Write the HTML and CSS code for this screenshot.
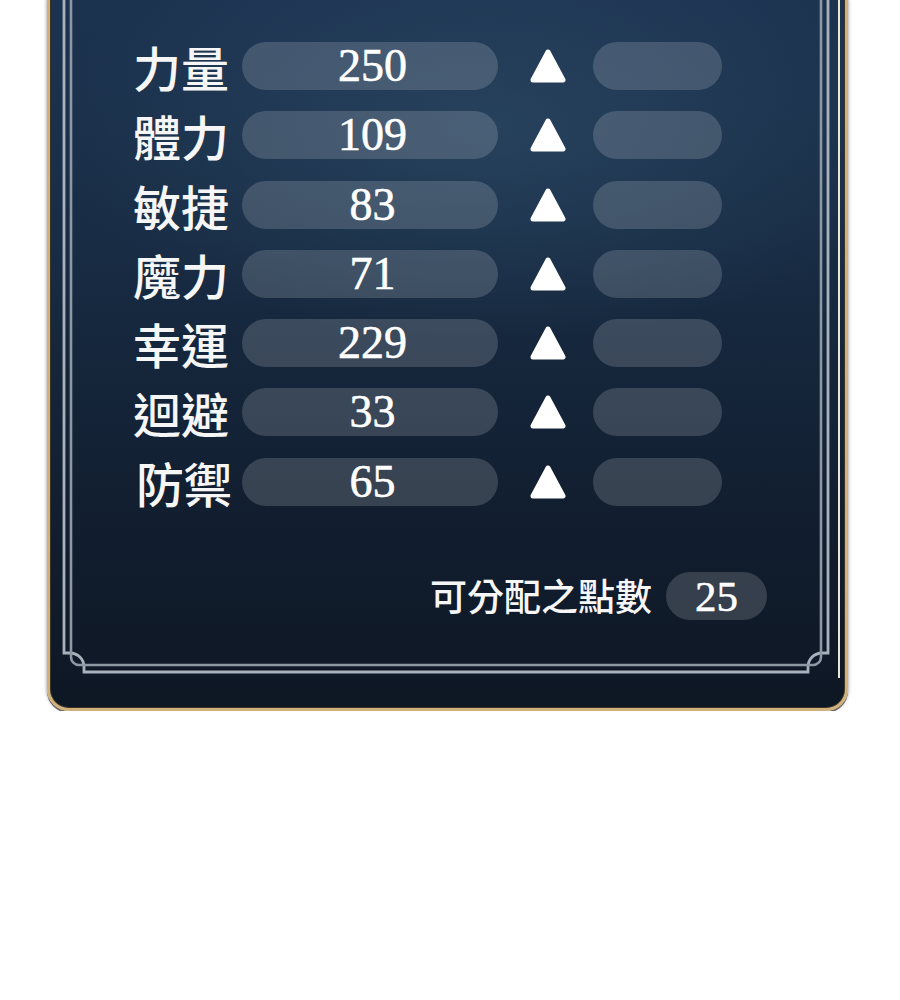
FILE: index.html
```html
<!DOCTYPE html>
<html lang="zh-Hant">
<head>
  <meta charset="UTF-8">
  <title>能力值</title>
  <link rel="stylesheet" href="styles.css">
</head>
<body>

  <div class="panel">
    <!-- decorative inner frame -->
    <svg class="frame" width="795" height="707" viewBox="0 0 795 707">
      <path class="line-outer" d="M14,0 V653 H20 A14,14 0 0 1 34,667 V672 H758 V667 A14,14 0 0 1 772,653 H778 V0"/>
      <path class="line-inner" d="M21,0 V657 A8,8 0 0 0 29,665 H763 A8,8 0 0 0 771,657 V0"/>
      <path class="line-cream" d="M789,0 V678"/>
    </svg>

    <div class="stats">
      <div class="row"><span class="label">力量</span><span class="value">250</span><span class="up"><svg width="36" height="34" viewBox="0 0 36 34"><polygon points="18,3 33,31 3,31"/></svg></span><span class="slot"></span></div>
      <div class="row"><span class="label">體力</span><span class="value">109</span><span class="up"><svg width="36" height="34" viewBox="0 0 36 34"><polygon points="18,3 33,31 3,31"/></svg></span><span class="slot"></span></div>
      <div class="row"><span class="label">敏捷</span><span class="value">83</span><span class="up"><svg width="36" height="34" viewBox="0 0 36 34"><polygon points="18,3 33,31 3,31"/></svg></span><span class="slot"></span></div>
      <div class="row"><span class="label">魔力</span><span class="value">71</span><span class="up"><svg width="36" height="34" viewBox="0 0 36 34"><polygon points="18,3 33,31 3,31"/></svg></span><span class="slot"></span></div>
      <div class="row"><span class="label">幸運</span><span class="value">229</span><span class="up"><svg width="36" height="34" viewBox="0 0 36 34"><polygon points="18,3 33,31 3,31"/></svg></span><span class="slot"></span></div>
      <div class="row"><span class="label">迴避</span><span class="value">33</span><span class="up"><svg width="36" height="34" viewBox="0 0 36 34"><polygon points="18,3 33,31 3,31"/></svg></span><span class="slot"></span></div>
      <div class="row"><span class="label shift">防禦</span><span class="value">65</span><span class="up"><svg width="36" height="34" viewBox="0 0 36 34"><polygon points="18,3 33,31 3,31"/></svg></span><span class="slot"></span></div>
    </div>

    <div class="points">
      <span class="points-label">可分配之點數</span>
      <span class="points-value">25</span>
    </div>
  </div>

</body>
</html>
```

FILE: styles.css
```css
body {
  margin: 0;
  background: #ffffff;
  font-family: "Noto Sans CJK TC", "Noto Sans", sans-serif;
}
.panel {
  position: relative;
  box-sizing: border-box;
  width: 801px;
  height: 711px;
  margin-left: 47px;
  padding: 42px 78px 0 83px;
  border: 3px solid #d2b07c;
  border-top: none;
  border-radius: 0 0 22px 22px;
  background:
    radial-gradient(ellipse 55% 30% at 55% 18%, rgba(52, 84, 112, 0.5) 0%, rgba(52, 84, 112, 0) 100%),
    linear-gradient(180deg, #1c3350 0%, #182c44 35%, #121f31 70%, #0e1724 100%);
  box-shadow:
    inset 1px 0 0 #3a3328,
    inset -1px 0 0 #3a3328,
    inset 0 -1px 0 #3a3328,
    0 2px 0 0 #6f6a62,
    0 0 3px 1px rgba(90, 90, 90, 0.45);
}
.frame {
  position: absolute;
  left: 0;
  top: 0;
  fill: none;
}
.line-outer {
  stroke: #a9b2bc;
  stroke-width: 2.8;
}
.line-inner {
  stroke: #8d98a4;
  stroke-width: 2.6;
}
.line-cream {
  stroke: #ebe7d6;
  stroke-width: 2;
}
.stats {
  position: relative;
  display: flex;
  flex-direction: column;
  gap: 21.3px;
}
.row {
  display: flex;
  align-items: center;
  height: 48px;
}
.label {
  width: 96px;
  margin-right: 13px;
  color: #f6f6f6;
  font-size: 48px;
  font-weight: 500;
  line-height: 1;
  white-space: nowrap;
}
.label.shift {
  text-indent: 3px;
}
.value {
  box-sizing: border-box;
  width: 256px;
  height: 48px;
  margin-right: 32px;
  padding-left: 5px;
  border-radius: 24px;
  background: rgba(255, 255, 255, 0.16);
  color: #ffffff;
  font-family: "Liberation Serif", serif;
  font-size: 46px;
  line-height: 48px;
  text-align: center;
  -webkit-text-stroke: 0.6px #ffffff;
}
.up {
  display: flex;
  width: 36px;
  margin-right: 27px;
}
.up polygon {
  fill: #ffffff;
  stroke: #ffffff;
  stroke-width: 5;
  stroke-linejoin: round;
}
.slot {
  width: 129px;
  height: 48px;
  border-radius: 24px;
  background: rgba(255, 255, 255, 0.16);
}
.points {
  position: relative;
  display: flex;
  justify-content: flex-end;
  align-items: center;
  gap: 14px;
  margin-top: 66px;
}
.points-label {
  color: #f6f6f6;
  font-size: 37px;
  font-weight: 500;
  line-height: 1;
}
.points-value {
  width: 101px;
  height: 48px;
  border-radius: 24px;
  background: rgba(255, 255, 255, 0.16);
  color: #ffffff;
  font-family: "Liberation Serif", serif;
  font-size: 43px;
  line-height: 50px;
  text-align: center;
  -webkit-text-stroke: 0.5px #ffffff;
}
```
